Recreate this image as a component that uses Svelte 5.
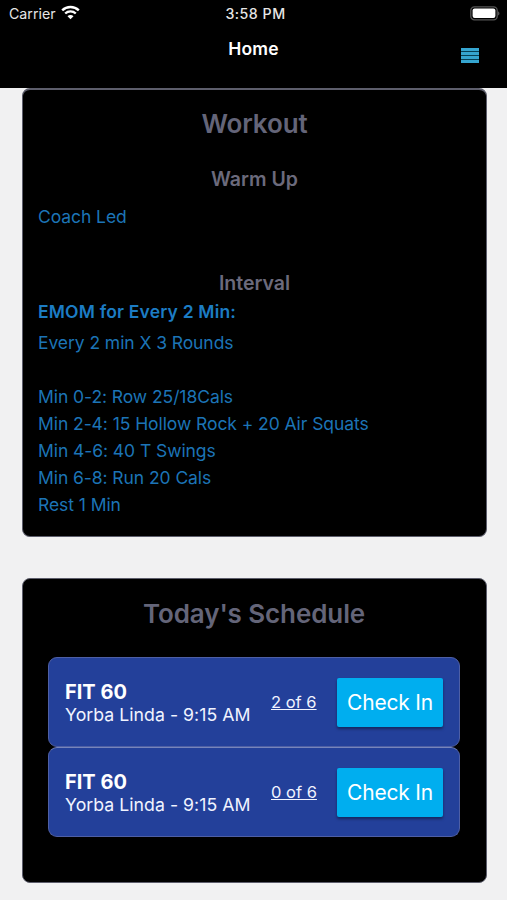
<script lang="ts">
  interface ClassSession {
    id: number;
    name: string;
    location: string;
    time: string;
    booked: number;
    capacity: number;
  }

  const intervals: string[] = [
    'Min 0-2: Row 25/18Cals',
    'Min 2-4: 15 Hollow Rock + 20 Air Squats',
    'Min 4-6: 40 T Swings',
    'Min 6-8: Run 20 Cals',
    'Rest 1 Min',
  ];

  const sessions: ClassSession[] = [
    { id: 1, name: 'FIT 60', location: 'Yorba Linda', time: '9:15 AM', booked: 2, capacity: 6 },
    { id: 2, name: 'FIT 60', location: 'Yorba Linda', time: '9:15 AM', booked: 0, capacity: 6 },
  ];
</script>

<div class="screen">
  <header>
    <div class="status-bar">
      <div class="carrier">
        <span>Carrier</span>
        <svg width="19" height="15" viewBox="0 0 19 15" aria-hidden="true">
          <path d="M1.2 5.3a12 12 0 0 1 16.6 0" />
          <path d="M4.2 8.5a7.7 7.7 0 0 1 10.6 0" />
          <path class="dot" d="M9.5 14.2 6.5 11.2a4.2 4.2 0 0 1 6 0z" />
        </svg>
      </div>
      <span class="clock">3:58 PM</span>
      <div class="battery">
        <svg width="31" height="15" viewBox="0 0 31 15" aria-hidden="true">
          <rect class="shell" x="0.8" y="0.8" width="26.4" height="13" rx="3.6" />
          <rect class="level" x="2.6" y="2.6" width="22.8" height="9.4" rx="2" />
          <path class="cap" d="M28.2 5.2v4.4a2.6 2.6 0 0 0 0-4.4z" />
        </svg>
      </div>
    </div>
    <div class="nav-bar">
      <h1>Home</h1>
      <button class="menu" aria-label="Menu">
        <span></span>
        <span></span>
        <span></span>
        <span></span>
      </button>
    </div>
  </header>

  <main>
    <section class="card workout">
      <h2>Workout</h2>
      <h3>Warm Up</h3>
      <p class="warm-up">Coach Led</p>
      <h3>Interval</h3>
      <p class="emom">EMOM for Every 2 Min:</p>
      <p class="rounds">Every 2 min X 3 Rounds</p>
      <ul>
        {#each intervals as line}
          <li>{line}</li>
        {/each}
      </ul>
    </section>

    <section class="card schedule">
      <h2>Today's Schedule</h2>
      {#each sessions as session (session.id)}
        <div class="session">
          <div class="info">
            <strong>{session.name}</strong>
            <span>{session.location} - {session.time}</span>
          </div>
          <a href="#roster">{session.booked} of {session.capacity}</a>
          <button class="check-in">Check In</button>
        </div>
      {/each}
    </section>
  </main>
</div>

<style>
  :global(body) {
    background: #f1f1f2;
  }
  .screen {
    height: 900px;
    overflow: hidden;
    font-family: Inter, "Liberation Sans", sans-serif;
    box-sizing: border-box;
  }
  .screen :is(h1, h2, h3, p, ul) {
    margin: 0;
    padding: 0;
  }
  header {
    height: 88px;
    box-sizing: border-box;
    background: #000;
    color: #fff;
  }

  /* status bar */
  .status-bar {
    display: grid;
    grid-template-columns: 1fr auto 1fr;
    align-items: center;
    height: 28px;
    padding: 0 6px 0 9px;
    font-size: 14.2px;
    color: #e6e6e6;
  }
  .carrier {
    display: flex;
    align-items: center;
    gap: 5px;
    margin-top: -1px;
  }
  .carrier path {
    fill: none;
    stroke: #fff;
    stroke-width: 2.4;
  }
  .carrier .dot {
    fill: #fff;
    stroke: none;
  }
  .carrier svg {
    margin-top: -2px;
  }
  .clock {
    margin: -2px 0 0 1px;
    font-weight: 500;
    letter-spacing: 0.5px;
  }
  .battery {
    display: flex;
    justify-content: flex-end;
    margin-top: -2px;
  }
  .shell {
    fill: none;
    stroke: #555;
    stroke-width: 1.3;
  }
  .level {
    fill: #fff;
  }
  .cap {
    fill: #666;
  }

  /* navigation bar */
  .nav-bar {
    display: grid;
    grid-template-columns: 1fr auto 1fr;
    align-items: start;
    padding: 10px 28px 0;
  }
  h1 {
    grid-column: 2;
    font-size: 17.5px;
    line-height: 22px;
    font-weight: 600;
    letter-spacing: 0.2px;
  }
  .menu {
    display: flex;
    flex-direction: column;
    justify-self: end;
    gap: 1px;
    width: 18px;
    margin-top: 10px;
    padding: 0;
    border: none;
    background: #064055;
  }
  .menu span {
    height: 3px;
    background: #35a5d0;
  }

  /* cards */
  main {
    display: flex;
    flex-direction: column;
    gap: 41px;
    padding: 0 20px 0 22px;
  }
  .card {
    box-sizing: border-box;
    border: 1px solid #5d5e6c;
    border-radius: 8px;
    background: #000;
  }
  h2 {
    font-size: 26px;
    line-height: 32px;
    font-weight: 600;
    letter-spacing: -0.1px;
    text-align: center;
    color: #646579;
  }
  h3 {
    font-size: 19.5px;
    line-height: 24px;
    font-weight: 600;
    text-align: center;
    color: #6b6a7c;
  }
  .workout {
    height: 449px;
    padding: 18px 15px 0;
    border-top: 2px solid #5d5e6c;
  }
  .workout h2 {
    margin-bottom: 27px;
  }
  .workout p,
  li {
    font-size: 17.5px;
    line-height: 27px;
    letter-spacing: -0.07px;
    color: #1c74b6;
  }
  .workout .warm-up {
    margin: 12px 0 41px;
  }
  .workout .emom {
    margin-top: 3px;
    font-weight: 600;
    letter-spacing: 0.18px;
    color: #1c7cc4;
  }
  .workout .rounds {
    margin: 4px 0 27px;
  }
  ul {
    list-style: none;
  }

  /* schedule */
  .schedule {
    height: 305px;
    padding: 19px 26px 0 25px;
  }
  .schedule h2 {
    margin-bottom: 27px;
  }
  .session {
    display: flex;
    align-items: center;
    box-sizing: border-box;
    height: 90px;
    padding: 0 16px;
    border: 1px solid #4e5fa5;
    border-radius: 9px;
    background: #23409a;
    color: #f1f4ff;
  }
  .session + .session {
    border-top-color: #7685bb;
  }
  .info {
    display: flex;
    flex-direction: column;
    width: 206px;
    padding-top: 1px;
    white-space: nowrap;
  }
  .info strong {
    font-size: 20px;
    line-height: 24px;
    font-weight: 700;
    color: #fff;
  }
  .info span {
    font-size: 17.7px;
    line-height: 22px;
    letter-spacing: 0.03px;
  }
  .session a {
    width: 66px;
    font-size: 16.5px;
    color: inherit;
    white-space: nowrap;
  }
  .check-in {
    flex: none;
    width: 106px;
    height: 49px;
    padding: 0;
    border: none;
    border-radius: 2px;
    background: #00aeef;
    box-shadow: 0 2px 3px rgba(0, 0, 0, 0.4);
    font-family: inherit;
    font-size: 21px;
    letter-spacing: -0.2px;
    color: #fff;
    white-space: nowrap;
  }
</style>
